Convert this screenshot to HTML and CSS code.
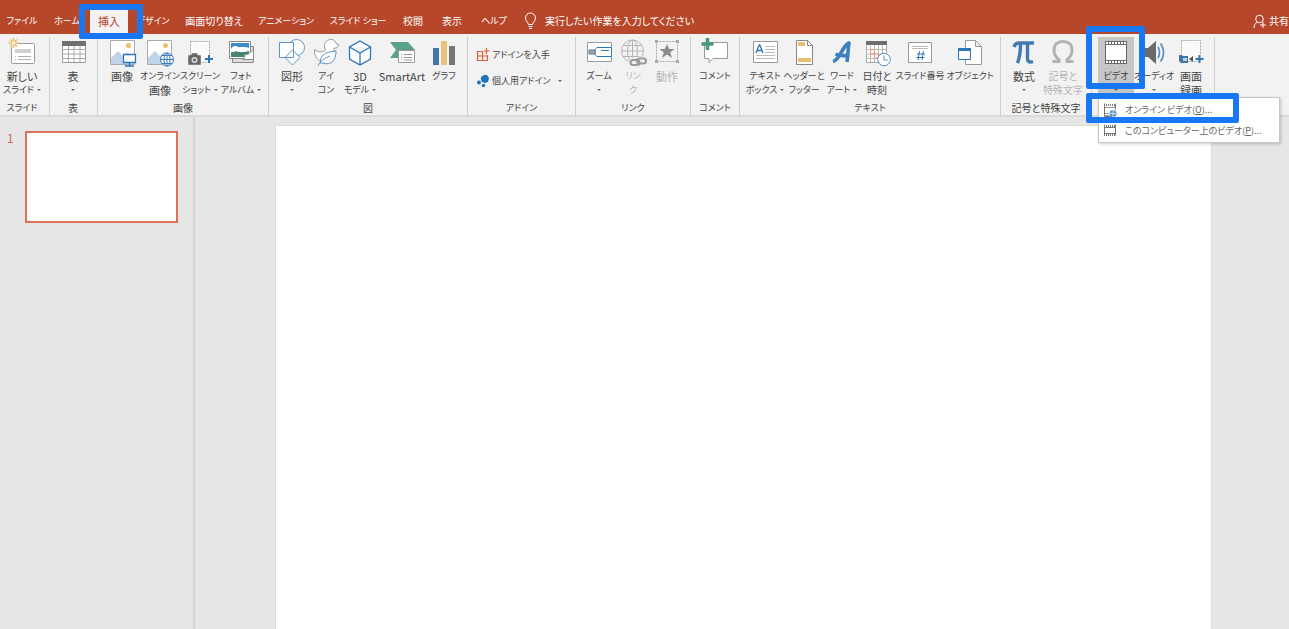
FILE: index.html
```html
<!DOCTYPE html>
<html lang="ja">
<head>
<meta charset="utf-8">
<meta name="viewport" content="width=device-width, initial-scale=1">
<title>プレゼンテーション</title>
<link rel="stylesheet" href="styles.css">
</head>
<body>
<header class="titlebar">
  <nav class="tabs">
    <button class="tab w44 kana">ファイル</button>
    <button class="tab w46 kana">ホーム</button>
    <div class="marked">
      <button class="tab w38 active">挿入</button>
      <span class="mark mark-tab"></span>
    </div>
    <button class="tab w50 kana">デザイン</button>
    <button class="tab w72 mid">画面切り替え</button>
    <button class="tab w72 kana">アニメーション</button>
    <button class="tab w72 kana">スライド ショー</button>
    <button class="tab w38 mid">校閲</button>
    <button class="tab w40 mid">表示</button>
    <button class="tab w44 kana">ヘルプ</button>
  </nav>
  <label class="tell">
    <svg width="13" height="18" viewBox="0 0 13 18" fill="none" stroke="#fff"><path d="M4.500 12.500c0-2-3-3.200-3-6.500a5 5 0 0 1 10 0c0 3.300-3 4.500-3 6.500zM4.500 14.500h4M5 16.500h3"/></svg>
    <input class="mid" type="text" value="実行したい作業を入力してください" aria-label="操作アシスト">
  </label>
  <button class="share mid">
    <svg width="13" height="15" viewBox="0 0 13 15" fill="none" stroke="#fff"><circle cx="6.500" cy="5" r="3.800"/><path d="M1 14c0-3 1.500-5 3.500-6M10 8v6M7 11h6"/></svg>
    共有
  </button>
</header>

<section class="ribbon" aria-label="挿入">
  <div class="group">
    <div class="tools">
      <button class="tool w44"><svg class="icon" viewBox="0 0 30 30"><rect x="4.500" y="6.500" width="23" height="20" rx="1" fill="#fff" stroke="#9a9a9a"/><path d="M8 12h16v4H8z" fill="#d0d0d0"/><path d="M8 19.500h1m2 0h13M8 22.500h1m2 0h13" stroke="#b0b0b0"/><circle cx="6.500" cy="6" r="4.500" fill="#f1f1f1"/><path d="M6.500 1v10M1.500 6h10M3 2.500l7 7M10 2.500l-7 7" stroke="#ebc06a" stroke-width="1.500"/><circle cx="6.500" cy="6" r="1.500" fill="#fff"/></svg><span>新しい</span><span class="kana drop">スライド</span></button>
    </div>
    <h2 class="kana">スライド</h2>
  </div>
  <div class="group table-group">
    <div class="tools">
      <button class="tool w36"><svg class="icon" viewBox="0 0 30 30"><path d="M4.500 4.500h23v21h-23z" fill="#fff" stroke="#999"/><path d="M4 4h24v5H4z" fill="#707070"/><path d="M4 12.500h24M4 17h24M4 21.500h24M10.500 9v16M16 9v16M22 9v16" stroke="#aaa"/></svg><span>表</span><span class="drop"></span></button>
    </div>
    <h2>表</h2>
  </div>
  <div class="group">
    <div class="tools">
      <button class="tool w36"><svg class="icon" viewBox="0 0 30 30"><path d="M3.500 3.500h24v24h-24z" fill="#fff" stroke="#aaa"/><path d="M4 27v-6l7-7 5 5 4-4 7 7v5z" fill="#c0d3e8"/><circle cx="21.500" cy="8.500" r="2.500" fill="#ebc06a"/><path d="M16.500 17.500h12v8h-12z" fill="#fff" stroke="#2e75b6" stroke-width="1.300"/><path d="M22.500 26v3M18 29h9" stroke="#2e75b6" stroke-width="1.300"/></svg><span>画像</span></button>
      <button class="tool w40"><svg class="icon" viewBox="0 0 30 30"><path d="M2.500 3.500h24v24h-24z" fill="#fff" stroke="#aaa"/><path d="M3 27v-6l7-7 5 5 4-4 7 7v5z" fill="#c0d3e8"/><circle cx="20.500" cy="8.500" r="2.500" fill="#ebc06a"/><g fill="#fff" stroke="#3c7dbb"><circle cx="22" cy="22.500" r="6.500"/><ellipse cx="22" cy="22.500" rx="3" ry="6.500"/><path d="M15.500 22.500h13M17 18.500h10M17 26.500h10M22 16v13" fill="none"/></g></svg><span class="kana">オンライン</span><span>画像</span></button>
      <button class="tool w40"><svg class="icon" viewBox="0 0 30 30"><path d="M5.500 4.500h19v21h-19z" fill="#fafafa" stroke="#aaa" stroke-dasharray="2 1"/><path d="M3 18h3l1-2h5l1 2h3v10H3z" fill="#666" stroke="#f2f2f2" stroke-width=".5"/><circle cx="9.500" cy="23" r="3" fill="#ddd"/><circle cx="9.500" cy="23" r="1.500" fill="#666"/><path d="M24 18v8M20 22h8" stroke="#f2f2f2" stroke-width="4"/><path d="M24 18v8M20 22h8" stroke="#2e75b6" stroke-width="2"/></svg><span class="kana">スクリーン</span><span class="kana drop">ショット</span></button>
      <button class="tool w42"><svg class="icon" viewBox="0 0 30 30"><path d="M6.500 9.500h21v16h-21z" fill="#ddd" stroke="#888"/><path d="M3.500 4.500h21v17h-21z" fill="#fff" stroke="#888"/><path d="M5 6h18v14H5z" fill="#3e8bc9"/><path d="M5 12c3-4 5-3 7-2s6-1 11 1v4H5z" fill="#fff"/><path d="M5 17l5-3 5 2 8-2v6H5z" fill="#43876c"/><path d="M27.500 12.500v10h-11c3-1 2-3 2-5 3 1 6-2 9-5z" fill="#fff" stroke="#888"/></svg><span class="kana">フォト</span><span class="kana drop">アルバム</span></button>
    </div>
    <h2>画像</h2>
  </div>
  <div class="group">
    <div class="tools">
      <button class="tool w34"><svg class="icon" viewBox="0 0 30 30" fill="#fff" stroke="#5b93c5"><circle cx="19.500" cy="10.500" r="8"/><path d="M2.500 5.500h14v15h-14zM15.500 13l7.500 7.500-7.500 7.500L8 20.500z"/></svg><span>図形</span><span class="drop"></span></button>
      <button class="tool w34"><svg class="icon" viewBox="0 0 30 30" fill="#fff"><path d="M12 25C7 24 3 20 3.500 12.500c3 2.500 7 3 10 1.500 2-1 0-2 0-5 0-4 3-6.500 6.500-6.500 3 0 5 2 5 4l2.500 1c0 3-2 4-4.500 3.500-1 2 2 4 1 8" stroke="#999"/><path d="M10 27c-2-8 3-12 15-13 0 9-4 15-14 12M7 29c2-5 7-8 12-10" stroke="#5b93c5"/></svg><span class="kana">アイ</span><span class="kana">コン</span></button>
      <button class="tool w34"><svg class="icon" viewBox="0 0 30 30" fill="#fff" stroke="#2e75b6" stroke-width="1.300"><path d="M15 4l10.500 6v12L15 28 4.500 22V10zM4.500 10L15 16l10.500-6M15 16v12"/></svg><span>3D</span><span class="kana drop">モデル</span></button>
      <button class="tool w50"><svg class="icon" viewBox="0 0 30 30"><path d="M3 5h18l7 8-7 8H3l6-8z" fill="#5aa287"/><path d="M11.500 13.500h16v12h-16z" fill="#fff" stroke="#999"/><path d="M14 17.500h1m2 0h8M14 20.500h1m2 0h8M14 23h1m2 0h8" stroke="#999"/></svg><span>SmartArt</span></button>
      <button class="tool w34"><svg class="icon" viewBox="0 0 30 30"><path d="M4 11h6v17H4z" fill="#4476ab"/><path d="M12 4h6v24h-6z" fill="#ebc27a"/><path d="M20 9h6v19h-6z" fill="#777"/></svg><span class="kana">グラフ</span></button>
    </div>
    <h2>図</h2>
  </div>
  <div class="group wide">
    <div class="addins">
      <button class="row"><svg width="14" height="14" viewBox="0 0 14 14" fill="none" stroke="#d9603c"><path d="M6.500 3.500h-5v9h10V7M1.500 8h10M6.500 3.500v9M10.500 0v6M7.500 3h6" stroke-width="1.200"/></svg><span class="kana">アドインを入手</span></button>
      <button class="row"><svg width="14" height="14" viewBox="0 0 14 14" fill="#1a73bd"><path d="M5 3l3-2h3l2 3-1 4-3 1-3-1-1-2z"/><circle cx="3" cy="8.500" r="2"/><circle cx="7.500" cy="11.500" r="1.700"/></svg><span class="kana drop">個人用アドイン</span></button>
    </div>
    <h2 class="kana">アドイン</h2>
  </div>
  <div class="group">
    <div class="tools">
      <button class="tool w34"><svg class="icon" viewBox="0 0 30 30" fill="#fff"><path d="M3.500 5.500h24v19h-24z" stroke="#999"/><path d="M13 10.500h14.500v9H13l-2-2v-5zM17 13.500h8" stroke="#2e75b6"/><path d="M5 13h6v4H5z" fill="#9ab" stroke="#678"/></svg><span class="kana">ズーム</span><span class="drop"></span></button>
      <button class="tool w34" disabled><svg class="icon" viewBox="0 0 30 30" fill="none" stroke="#b9b1b9"><circle cx="14.500" cy="14" r="11"/><ellipse cx="14.500" cy="14" rx="5" ry="11"/><path d="M3.500 14h22M5 8.500h19M5 19.500h19M14.500 3v22"/><g stroke="#f1f1f1" stroke-width="5"><rect x="13" y="23" width="8" height="5" rx="2.500"/><rect x="19" y="22" width="9" height="5" rx="2.500"/></g><g stroke="#999" stroke-width="2"><rect x="12.500" y="23" width="9" height="5" rx="2.500"/><rect x="19" y="21.500" width="9" height="5" rx="2.500"/></g></svg><span class="kana">リン</span><span class="kana">ク</span></button>
      <button class="tool w34" disabled><svg class="icon" viewBox="0 0 30 30"><path d="M4.500 4.500h21v20h-21z" fill="none" stroke="#aaa" stroke-dasharray="2 1"/><path d="M3 3h3v3H3zM24 3h3v3h-3zM3 23h3v3H3zM24 23h3v3h-3z" fill="#aaa"/><path d="M15 7l2.200 5h5.300l-4.300 3.400 1.800 5.600-5-3.400-5 3.400 1.800-5.600L7.500 12h5.300z" fill="#8c8c8c"/></svg><span>動作</span></button>
    </div>
    <h2 class="kana">リンク</h2>
  </div>
  <div class="group">
    <div class="tools">
      <button class="tool w36"><svg class="icon" viewBox="0 0 30 30"><path d="M4.500 5.500h23v16H13l-4 4v-4H4.500z" fill="#fff" stroke="#999"/><path d="M7.500 1v12M1.500 7h12" stroke="#4d9679" stroke-width="3.500"/></svg><span class="kana">コメント</span></button>
    </div>
    <h2 class="kana">コメント</h2>
  </div>
  <div class="group">
    <div class="tools">
      <button class="tool w38"><svg class="icon" viewBox="0 0 30 30"><path d="M3.500 4.500h24v21h-24z" fill="#fff" stroke="#999"/><path d="M6 16l3.200-8h.600L13 16M7.200 13.500h4.500" fill="none" stroke="#2e75b6" stroke-width="1.300"/><path d="M15 9.500h10M15 12.500h10M15 15.500h10M6 18.500h19M6 21.500h19" stroke="#bbb"/></svg><span class="kana">テキスト</span><span class="kana drop">ボックス</span></button>
      <button class="tool w40"><svg class="icon" viewBox="0 0 30 30"><path d="M7.500 3.500h11l5 5v19h-16z" fill="#fff" stroke="#888"/><path d="M18.500 3.500v5h5" fill="none" stroke="#888"/><path d="M9 5h7v4H9zM9 21h13v4H9z" fill="#e9be70"/></svg><span class="kana">ヘッダーと</span><span class="kana">フッター</span></button>
      <button class="tool w36"><svg class="icon" viewBox="0 0 30 30"><path d="M6 24.500C13 23 15 9 22 6c-1 6-1 13-2 19M8.500 17c4 2 8 2 13 1" fill="none" stroke="#3e7fbd" stroke-width="3.600" stroke-linejoin="round"/></svg><span class="kana">ワード</span><span class="kana drop">アート</span></button>
      <button class="tool w34"><svg class="icon" viewBox="0 0 30 30"><path d="M4.500 4.500h20v21h-20z" fill="#fff" stroke="#aaa"/><path d="M4 4h21v4H4z" fill="#6e6e6e"/><path d="M4 12.500h20M4 17h20M4 21.500h20M8.500 8v17M12.500 8v17M16.500 8v17M20.500 8v17" stroke="#bbb"/><path d="M8.500 12.500h4V17h-4zM12.500 17h4v4h-4z" fill="none" stroke="#e49b7a"/><circle cx="22" cy="22.500" r="6.300" fill="#fff" stroke="#5c93c5"/><path d="M22 18.500v4.500h3.500" fill="none" stroke="#5c93c5"/></svg><span class="mid">日付と</span><span class="mid">時刻</span></button>
      <button class="tool w52"><svg class="icon" viewBox="0 0 30 30"><path d="M3.500 5.500h23v20h-23z" fill="#fff" stroke="#999"/><path d="M7 9.500h16M7 11.500h16" stroke="#bbb"/><path d="M14.500 14l-1.500 9M18.500 14L17 23M12 17h8M11.500 20.500h8" stroke="#2e75b6"/></svg><span class="kana">スライド番号</span></button>
      <button class="tool w48"><svg class="icon" viewBox="0 0 30 30" fill="#fff"><path d="M10.500 3.500h10l6 6v18h-16zM20.500 3.500v6h6" stroke="#999"/><path d="M3.500 11.500h12v11h-12z" stroke="#2e75b6"/><path d="M3 11h13v3H3z" fill="#2e75b6"/></svg><span class="kana">オブジェクト</span></button>
    </div>
    <h2 class="kana">テキスト</h2>
  </div>
  <div class="group">
    <div class="tools">
      <button class="tool w34"><svg class="icon" viewBox="0 0 30 30"><path d="M5 10c1-3 2-4 5-4h15M11.500 7c0 9-1 14-3 19M18.500 7v14c0 3 1 5 5.500 3.500" fill="none" stroke="#4179b0" stroke-width="3.400"/></svg><span>数式</span><span class="drop"></span></button>
      <button class="tool w44" disabled><svg class="icon" viewBox="0 0 30 30"><path d="M4.500 24.500H11v-2c-3-2-5-5-5-9.500C6 7.500 9.500 4.500 15 4.500s9 3 9 8.500c0 4.500-2 7.500-5 9.500v2h6.500" fill="none" stroke="#b2b2b2" stroke-width="3"/></svg><span class="mid">記号と</span><span class="mid">特殊文字</span></button>
    </div>
    <h2 class="mid">記号と特殊文字</h2>
  </div>
  <div class="group">
    <div class="tools">
      <div class="marked">
        <button class="tool w36 pressed"><svg class="icon" viewBox="0 0 30 30"><path d="M4 4h22v23H4z" fill="#6a6a6a"/><path d="M5 8h20v15H5z" fill="#fff"/><path d="M5 6h20M5 25h20" stroke="#fff" stroke-width="2" stroke-dasharray="2 1"/></svg><span class="kana">ビデオ</span><span class="drop"></span></button>
        <span class="mark mark-video"></span>
        <div class="menu" role="menu">
          <div class="marked">
            <button class="item" role="menuitem"><svg width="14" height="14" viewBox="0 0 14 14"><path d="M1.500 .500v13h7M12.500 .500v6" fill="none" stroke="#777"/><path d="M1 2h12" stroke="#777" stroke-width="2" stroke-dasharray="1 1"/><path d="M2 4.500h10M2 10.500h4M1 12.500h5" stroke="#999"/><circle cx="10" cy="10.500" r="3.500" fill="#5a92cc"/><path d="M7 10.500h6M10 7v7" stroke="#cfe0f2"/></svg><span>オンライン ビデオ(<u>O</u>)...</span></button>
            <span class="mark mark-item"></span>
          </div>
          <button class="item" role="menuitem"><svg width="14" height="14" viewBox="0 0 14 14"><path d="M1.500 .500v11M12.500 .500v11" stroke="#777"/><path d="M1 2h12M1 11h12" stroke="#777" stroke-width="2" stroke-dasharray="1 1"/><path d="M2 3.500h10M2 9.500h10" stroke="#777"/></svg><span>このコンピューター上のビデオ(<u>P</u>)...</span></button>
        </div>
      </div>
      <button class="tool w40"><svg class="icon" viewBox="0 0 30 30"><path d="M5 11h4l8-7v23l-8-7H5z" fill="#6a6a6a"/><path d="M19 10c2 3 2 8 0 11M21.500 6.500c4 5 4 13 0 18" fill="none" stroke="#4e8cc4" stroke-width="1.600"/></svg><span class="kana">オーディオ</span><span class="drop"></span></button>
      <button class="tool w34"><svg class="icon" viewBox="0 0 30 30"><path d="M5.500 3.500h19v21h-19z" fill="#fafafa" stroke="#aaa" stroke-dasharray="2 1"/><path d="M3 18h3l1 1h5v7H5l-2-2z" fill="#3f75a5"/><path d="M7 21h4v3H7z" fill="#bfd3e5"/><path d="M13 22l4-3v6z" fill="#555"/><path d="M23.500 18v8M19.500 22h8" stroke="#f2f2f2" stroke-width="4"/><path d="M23.500 18v8M19.500 22h8" stroke="#2e75b6" stroke-width="2"/></svg><span>画面</span><span>録画</span></button>
    </div>
  </div>
</section>

<main class="workspace">
  <aside class="thumbs">
    <span class="number">1</span>
    <button class="thumb" aria-label="スライド 1"></button>
  </aside>
  <section class="canvas"><div class="slide"></div></section>
</main>
</body>
</html>
```
FILE: styles.css
```css
* { box-sizing: border-box; }

body {
  margin: 0;
  height: 100vh;
  display: flex;
  flex-direction: column;
  overflow: hidden;
  background: #e6e6e6;
  color: #444;
  font: 11px/14px "Noto Sans CJK JP", sans-serif;
  font-feature-settings: "palt";
}

button, input {
  margin: 0;
  padding: 0;
  border: 0;
  background: none;
  color: inherit;
  font: inherit;
  font-feature-settings: inherit;
  white-space: nowrap;
}

svg { flex: none; }

.mid { font-size: 10px; }
.kana { font-size: 9px; }

.w34 { width: 34px; }
.w36 { width: 36px; }
.w38 { width: 38px; }
.w40 { width: 40px; }
.w42 { width: 42px; }
.w44 { width: 44px; }
.w46 { width: 46px; }
.w48 { width: 48px; }
.w50 { width: 50px; }
.w52 { width: 52px; }
.w72 { width: 72px; }

.marked { position: relative; }

.mark {
  position: absolute;
  z-index: 3;
  border: 6px solid #1877f2;
  border-radius: 2px;
  pointer-events: none;
}

.mark-tab { inset: -4px -15px -5px -11px; }
.mark-video { inset: -11px -11px 10px -12px; }
.mark-item { inset: -6px 40px -3px -13px; }

/* Title bar */
.titlebar {
  display: flex;
  align-items: flex-end;
  height: 34px;
  flex: none;
  background: #b7472a;
  color: #fff;
}

.tabs { display: flex; }

.tab {
  display: flex;
  justify-content: center;
  align-items: center;
  height: 26px;
}

.tab.active {
  background: #f3f3f3;
  color: #b7472a;
}

.tell {
  display: flex;
  align-items: center;
  gap: 8px;
  height: 26px;
  padding-left: 8px;
  flex: 1;
}

.tell input { width: 160px; outline: 0; }

.share {
  display: flex;
  align-items: center;
  gap: 3px;
  height: 26px;
}

/* Ribbon */
.ribbon {
  display: flex;
  flex: none;
  padding-top: 3px;
  background: #f2f2f2;
  border-bottom: 2px solid #dadada;
}

.group {
  display: flex;
  flex-direction: column;
  justify-content: space-between;
  flex: none;
  height: 78px;
  padding: 0 6px;
  border-right: 1px solid #cfcfcf;
}

.group:first-child { padding: 0 5px 0 0; }
.table-group { padding: 0 6px 0 5px; }

.group h2 {
  margin: 0;
  font-size: 10px;
  font-weight: 400;
  text-align: center;
}

.group h2.kana { font-size: 9px; }

.tools { display: flex; align-items: flex-start; }

.tool {
  display: flex;
  flex-direction: column;
  align-items: center;
  height: 62px;
}

.tool > span { height: 14px; }
.tool:disabled { color: #b4b4b4; }
.tool.pressed { background: #c5c5c5; }

.icon { width: 30px; height: 30px; margin-bottom: 2px; }

.drop { display: flex; align-items: center; gap: 3px; }

.drop::after {
  content: "";
  border: 2px solid transparent;
  border-top-color: #666;
  border-bottom: 0;
}

.wide { width: 108px; }

.addins {
  display: grid;
  gap: 12px;
  padding: 11px 0 0 2px;
}

.row {
  display: flex;
  align-items: center;
  gap: 2px;
}

.row .drop { gap: 8px; }

/* Drop-down menu */
.menu {
  position: absolute;
  top: 60px;
  left: 0;
  z-index: 2;
  width: 182px;
  padding: 1px 0;
  background: #fff;
  border: 1px solid #c6c6c6;
  box-shadow: 1px 1px 3px #0003;
}

.item {
  display: flex;
  align-items: center;
  gap: 8px;
  width: 100%;
  height: 21px;
  padding-left: 4px;
  color: #666;
  font-size: 9px;
}

/* Workspace */
.workspace { display: flex; flex: 1; min-height: 0; }

.thumbs {
  display: flex;
  align-items: flex-start;
  gap: 11px;
  width: 195px;
  padding: 14px 15px 0 7px;
  border-right: 2px solid #d6d6d6;
}

.number { color: #d4694d; font-size: 12px; }

.thumb {
  flex: 1;
  aspect-ratio: 5 / 3;
  background: #fff;
  border: 2px solid #dd7459;
}

.canvas {
  display: flex;
  flex: 1;
  padding: 8px 77px 0 80px;
}

.slide {
  flex: 1;
  background: #fff;
  border: 1px solid #dcdcdc;
  border-bottom: 0;
}
```
